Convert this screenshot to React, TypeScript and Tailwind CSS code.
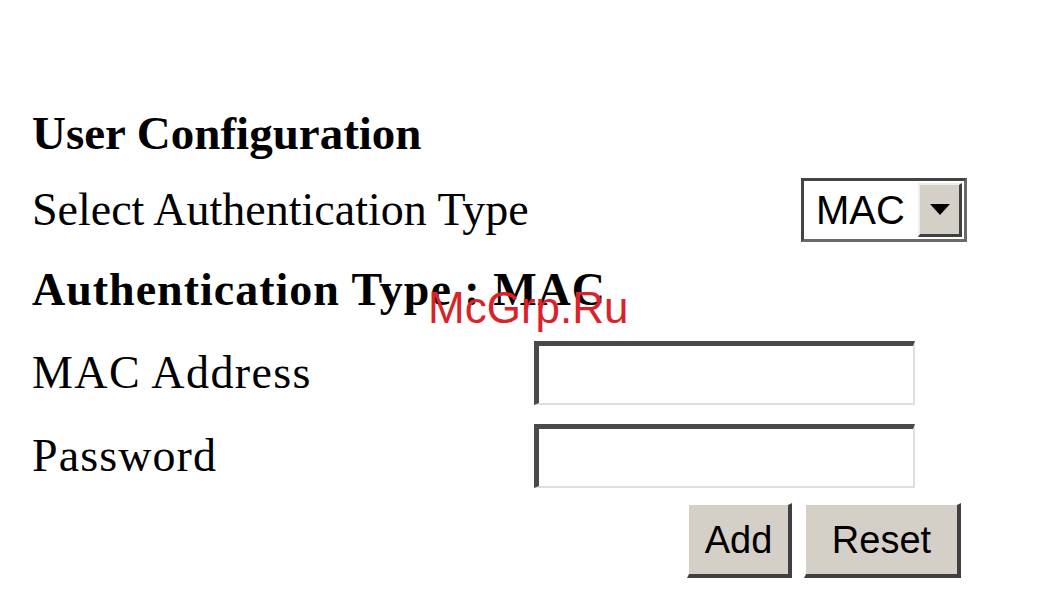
import React from "react"

const serif = { fontFamily: '"Liberation Serif", "Times New Roman", serif' }
const sans = { fontFamily: '"Liberation Sans", Arial, sans-serif' }

function TextBox() {
  return (
    <input
      type="text"
      className="box-border h-[64px] w-[381px] border-t-[5px] border-l-[5px] border-b-2 border-r-2 border-t-[#4a4a4a] border-l-[#4a4a4a] border-b-[#e2dfda] border-r-[#e2dfda] bg-white outline-none"
    />
  )
}

function Button({ label, width }: { label: string; width: string }) {
  return (
    <button
      className={`box-border h-[75px] ${width} border-t-2 border-l-2 border-b-4 border-r-4 border-t-white border-l-white border-b-[#404040] border-r-[#404040] bg-[#d4d0c8] text-[38px] leading-none text-black`}
      style={sans}
    >
      {label}
    </button>
  )
}

export default function App() {
  return (
    <div className="relative h-[612px] w-[1042px] overflow-hidden bg-white text-black" style={serif}>
      <div className="flex w-[967px] flex-col pl-[32px] pt-[101px]">
        <div className="flex h-[64px] items-center">
          <h1 className="text-[47px] font-bold leading-none">User Configuration</h1>
        </div>

        <div className="mt-[13px] flex h-[64px] items-center justify-between">
          <span className="text-[46px] leading-none">Select Authentication Type</span>
          <div className="box-border flex h-[64px] w-[166px] items-stretch border-[3px] border-t-[#444] border-l-[#444] border-b-[#6a6a6a] border-r-[#6a6a6a] bg-white">
            <span className="flex flex-1 items-center pl-[12px] text-[40px] leading-none" style={sans}>
              MAC
            </span>
            <div className="my-[2px] mr-[2px] box-border flex w-[44px] items-center justify-center border-t-2 border-l-2 border-b-[3px] border-r-[3px] border-t-[#f0eeea] border-l-[#f0eeea] border-b-[#404040] border-r-[#404040] bg-[#d4d0c8]">
              <svg width="20" height="11" viewBox="0 0 20 11">
                <polygon points="0,0 20,0 10,11" fill="#000" />
              </svg>
            </div>
          </div>
        </div>

        <div className="mt-[16px] flex h-[64px] items-center">
          <h2 className="text-[46px] font-bold leading-none tracking-[1px]">Authentication Type : MAC</h2>
        </div>

        <div className="mt-[19px] flex h-[64px] items-center">
          <span className="w-[502px] text-[46px] leading-none tracking-[1.4px]">MAC Address</span>
          <TextBox />
        </div>

        <div className="mt-[19px] flex h-[64px] items-center">
          <span className="w-[502px] text-[46px] leading-none tracking-[1.1px]">Password</span>
          <TextBox />
        </div>

        <div className="mt-[15px] flex justify-end gap-[12px] pr-[6px]">
          <Button label="Add" width="w-[105px]" />
          <Button label="Reset" width="w-[157px]" />
        </div>
      </div>

      <div className="absolute left-[428px] top-[286px] text-[44px] leading-none text-[#d9232a]" style={sans}>
        McGrp.Ru
      </div>
    </div>
  )
}
